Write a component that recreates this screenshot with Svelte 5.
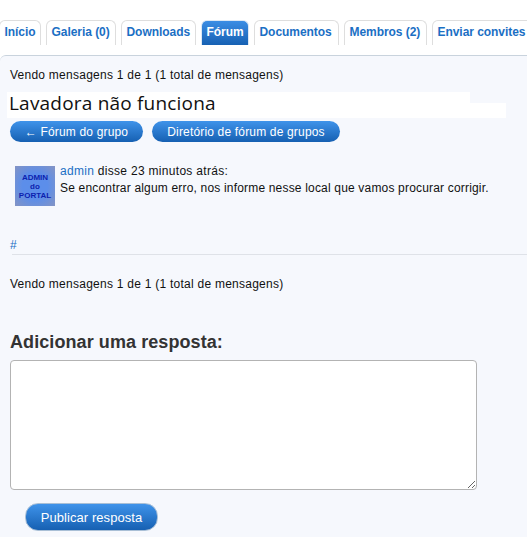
<script>
  const tabs = [
    { label: 'Início', w: 42 },
    { label: 'Galeria (0)', w: 70 },
    { label: 'Downloads', w: 75 },
    { label: 'Fórum', w: 48, active: true },
    { label: 'Documentos', w: 85 },
    { label: 'Membros (2)', w: 83 },
    { label: 'Enviar convites', w: 100 }
  ];
</script>

<div class="page">
  <nav class="tabs">
    {#each tabs as t}
      <a class="tab" class:active={t.active} style="width:{t.w}px">{t.label}</a>
    {/each}
  </nav>

  <main class="panel">
    <p class="count first">Vendo mensagens 1 de 1 (1 total de mensagens)</p>
    <h1 class="title">Lavadora não funciona</h1>
    <div class="actions">
      <button class="btn small back">← Fórum do grupo</button>
      <button class="btn small dir">Diretório de fórum de grupos</button>
    </div>

    <article class="post">
      <div class="avatar"><span>ADMIN</span><span>do</span><span>PORTAL</span></div>
      <div class="body">
        <p class="meta"><a class="link">admin</a> disse 23 minutos atrás:</p>
        <p class="msg">Se encontrar algum erro, nos informe nesse local que vamos procurar corrigir.</p>
      </div>
    </article>

    <a class="hash">#</a>
    <hr />
    <p class="count second">Vendo mensagens 1 de 1 (1 total de mensagens)</p>

    <h2 class="reply">Adicionar uma resposta:</h2>
    <textarea class="box"></textarea>
    <button class="btn publish">Publicar resposta</button>
  </main>
</div>

<style>
  :global(body) {
    margin: 0;
    background: #fff;
  }
  .page {
    width: 527px;
    height: 537px;
    overflow: hidden;
    font-family: "Liberation Sans", Arial, sans-serif;
    font-size: 12px;
    color: #111;
    letter-spacing: 0.19px;
  }
  .tabs {
    display: flex;
    gap: 5px;
    height: 25px;
    padding: 20px 0 0 0;
    margin-left: -1px;
    white-space: nowrap;
  }
  .tab {
    flex: none;
    box-sizing: border-box;
    height: 25px;
    padding-left: 4.5px;
    border: 1px solid #dedede;
    border-bottom: 0;
    border-radius: 6px 6px 0 0;
    background: #fff;
    color: #1b6fc4;
    font-weight: bold;
    line-height: 23px;
    letter-spacing: -0.05px;
    overflow: hidden;
  }
  .tab.active {
    border-color: #dce8f4;
    background: linear-gradient(#3b8de4, #1761b3);
    color: #fff;
  }
  .panel {
    box-sizing: border-box;
    height: 482px;
    margin-top: 10px;
    border-top: 1px solid #c9d3dd;
    border-top-left-radius: 6px;
    background: #f6f8fd;
    padding-top: 1px;
  }
  p {
    margin: 0;
  }
  .count {
    padding-left: 10px;
    line-height: 14px;
    letter-spacing: 0.25px;
  }
  .first {
    margin-top: 11px;
  }
  .title {
    box-sizing: border-box;
    width: 499px;
    height: 26px;
    margin: 10px 0 0 7px;
    padding-left: 2px;
    background:
      linear-gradient(#fff, #fff) 0 0 / 463px 11px no-repeat,
      linear-gradient(#fff, #fff) 0 11px / 499px 15px no-repeat;
    font-family: "Open Sans", "Noto Sans", sans-serif;
    font-size: 19px;
    font-weight: 400;
    line-height: 23px;
    letter-spacing: 0.2px;
    color: #111;
  }
  .actions {
    display: flex;
    gap: 9px;
    margin: 3px 0 0 10px;
  }
  .btn {
    display: block;
    box-sizing: border-box;
    padding: 0;
    border: 0;
    font-family: inherit;
    letter-spacing: 0.17px;
    color: #fff;
    background: linear-gradient(#3f93ea, #1660b2);
    text-align: center;
  }
  .small {
    height: 21px;
    border-radius: 11px;
    font-size: 12px;
    line-height: 20px;
  }
  .back {
    width: 133px;
  }
  .dir {
    width: 188px;
  }
  .post {
    display: flex;
    gap: 5px;
    margin: 20px 0 0 15px;
    height: 76px;
  }
  .avatar {
    flex: none;
    display: flex;
    flex-direction: column;
    justify-content: center;
    align-items: center;
    width: 40px;
    height: 40px;
    margin-top: 4px;
    background: radial-gradient(circle, #5c8eea 45%, #8494c4 100%);
    color: #0d1fae;
    font-size: 8px;
    font-weight: bold;
    line-height: 9px;
    letter-spacing: 0;
  }
  .meta {
    line-height: 15px;
    padding-top: 2px;
    letter-spacing: 0.3px;
  }
  .msg {
    margin-top: 2px;
    line-height: 15px;
    letter-spacing: 0.18px;
  }
  .link {
    color: #1b6fc4;
  }
  .hash {
    display: block;
    margin-left: 10px;
    height: 14px;
    line-height: 14px;
    color: #1b6fc4;
  }
  hr {
    height: 1px;
    margin: 2px 0 0 12px;
    border: 0;
    background: #dfe2e8;
  }
  .second {
    margin-top: 22px;
  }
  .reply {
    margin: 40px 0 0 10px;
    font-size: 18px;
    line-height: 22px;
    font-weight: bold;
    letter-spacing: 0.08px;
    color: #333;
  }
  .box {
    display: block;
    box-sizing: border-box;
    width: 467px;
    height: 130px;
    margin: 7px 0 0 10px;
    border: 1px solid #b3b3b3;
    border-radius: 4px;
    background: #fff;
    outline: 0;
  }
  .publish {
    width: 133px;
    height: 28px;
    margin: 13px 0 0 25px;
    border: 1px solid #a9bfd6;
    border-radius: 13px;
    font-size: 13px;
    line-height: 25px;
    letter-spacing: 0.07px;
  }
</style>
